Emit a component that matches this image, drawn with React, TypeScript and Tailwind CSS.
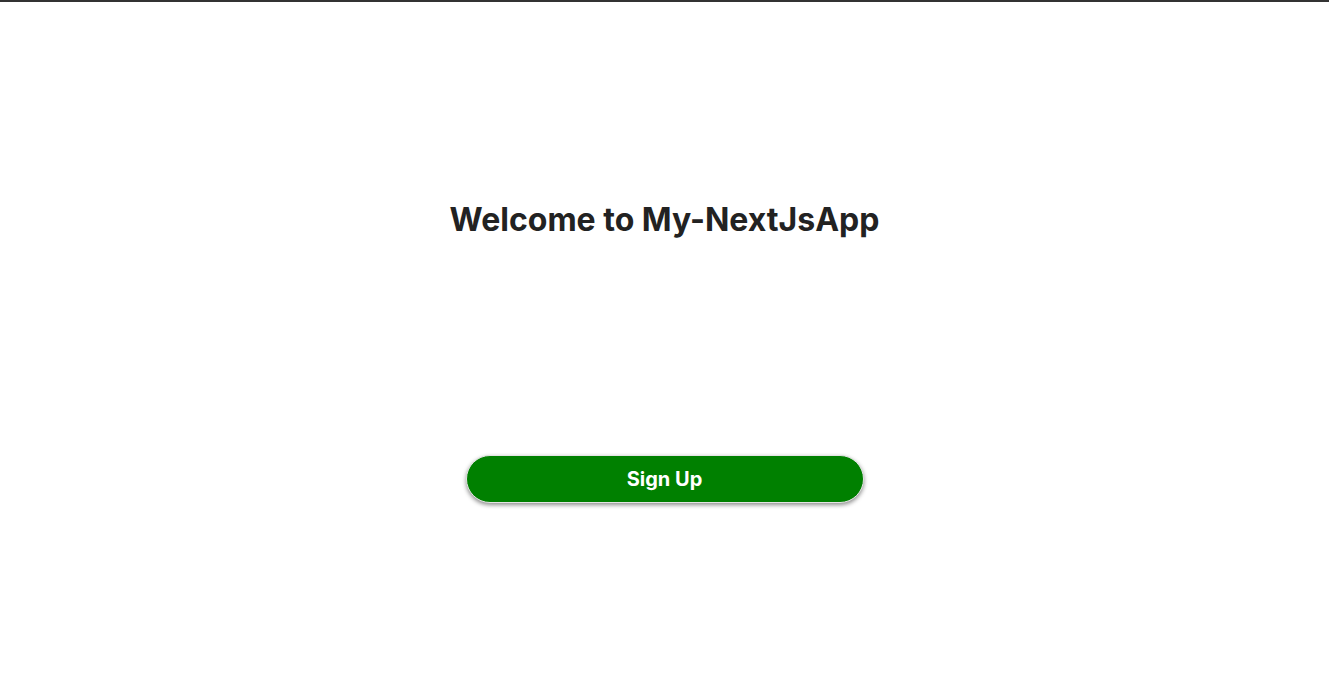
export default function App() {
  return (
    <div className="min-h-[697px] bg-white border-t-2 border-[#333333]" style={{ fontFamily: "Inter, 'Noto Sans', sans-serif" }}>
      <div className="flex flex-col items-center">
        <h1 className="mt-[194px] text-[32px] leading-[48px] font-bold text-[#222222]">Welcome to My-NextJsApp</h1>
        <button className="mt-[211px] w-[398px] h-[48px] rounded-full bg-[#008000] border border-[#e5e5e5] text-white text-[20px] font-bold shadow-[0_2px_4px_rgba(0,0,0,0.45)]" style={{ fontFamily: "Inter, sans-serif" }}>
          Sign Up
        </button>
      </div>
    </div>
  );
}
